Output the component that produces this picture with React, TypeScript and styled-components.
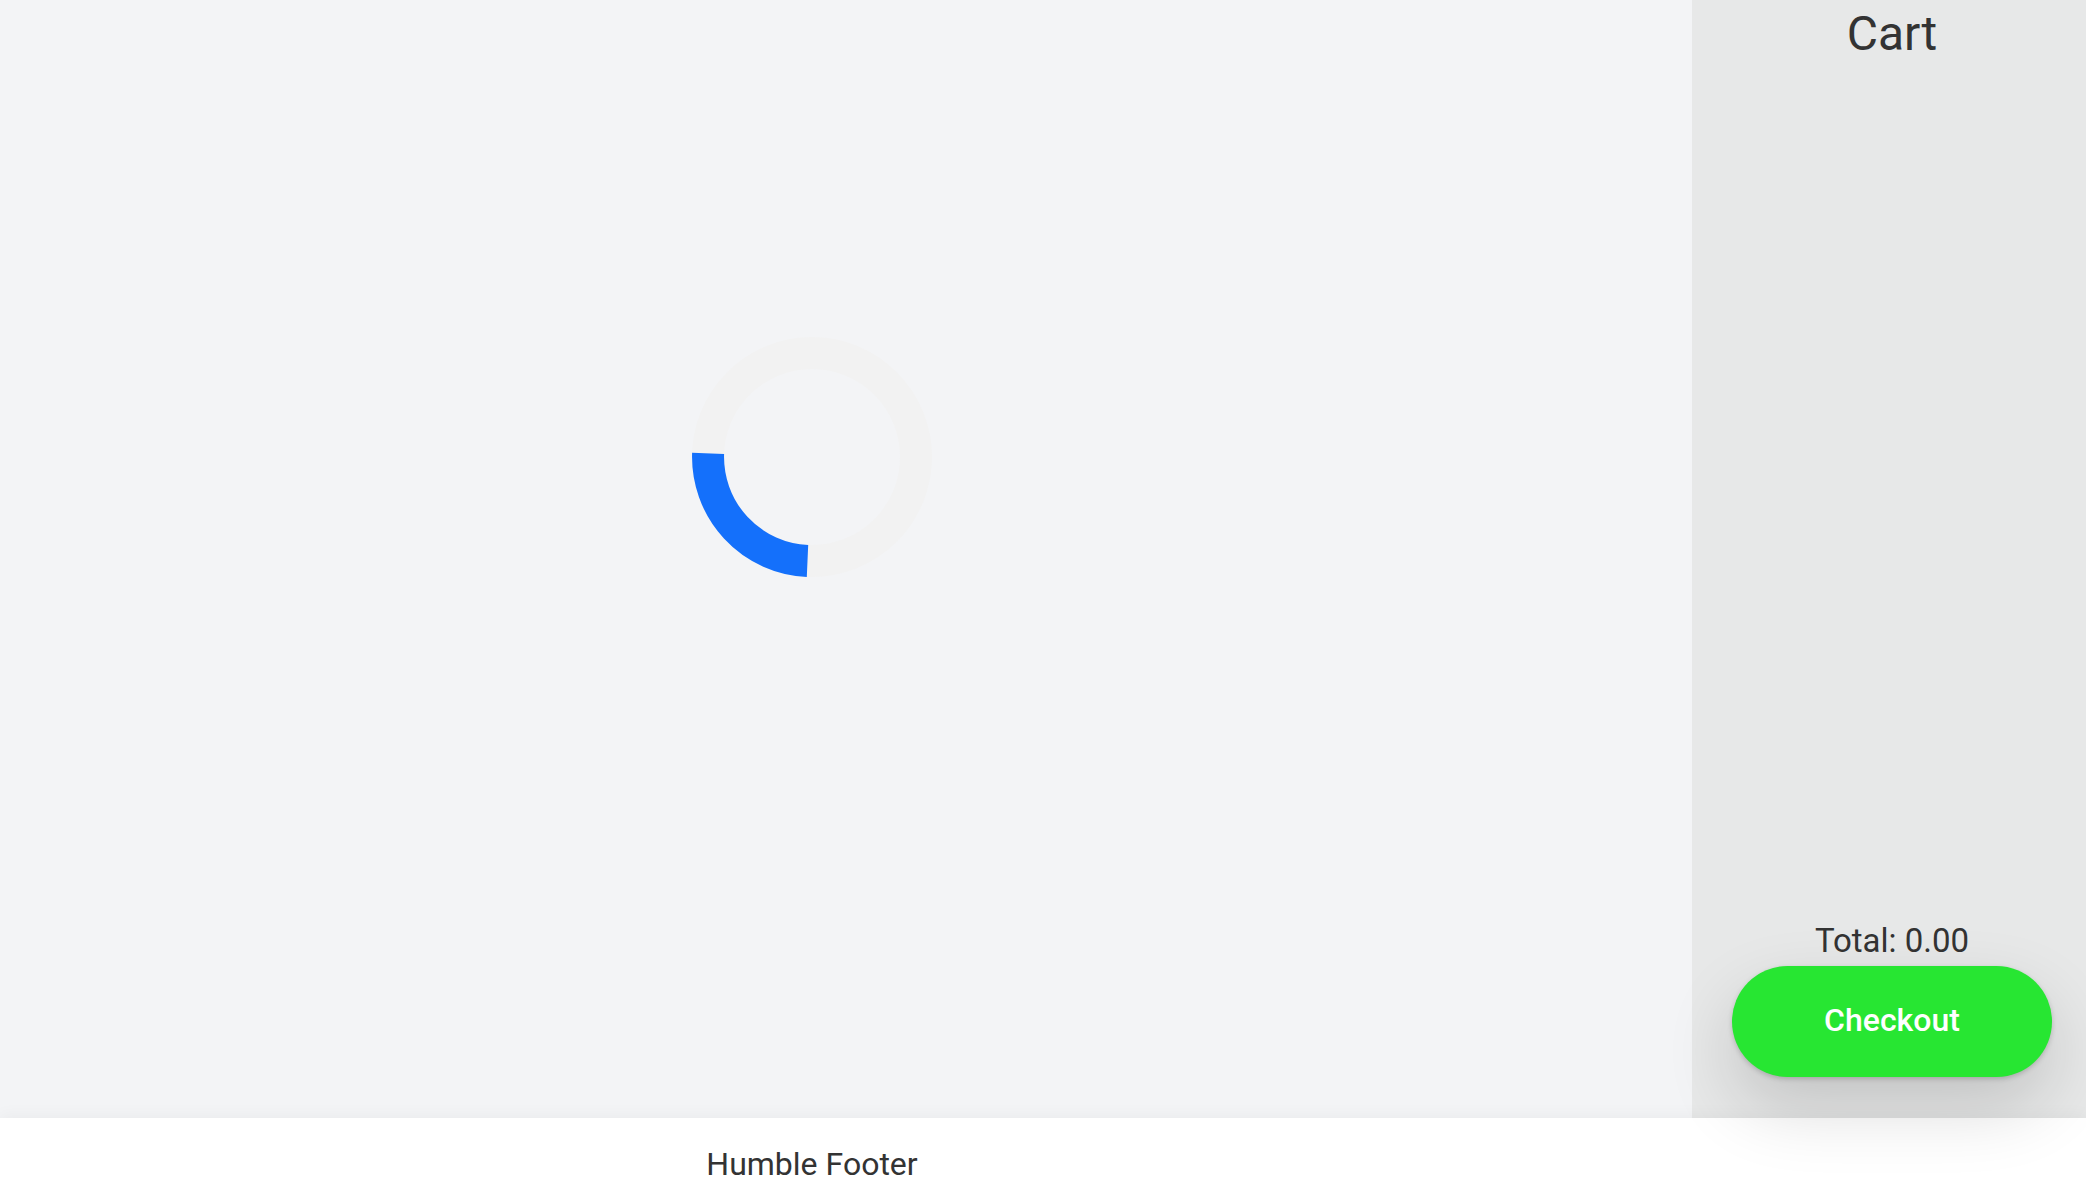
import React from "react";
import styled, { createGlobalStyle } from "styled-components";

const Global = createGlobalStyle`
  html, body { margin: 0; padding: 0; }
  body {
    font-family: Roboto, "Liberation Sans", Arial, sans-serif;
    color: #333333;
    background: #ffffff;
  }
`;

const Page = styled.div`
  display: flex;
  flex-direction: column;
  width: 2086px;
  height: 1190px;
  overflow: hidden;
`;

const Body = styled.div`
  display: flex;
  height: 1118px;
`;

const Content = styled.main`
  flex: 1;
  background: #f3f4f6;
  display: flex;
  justify-content: center;
  align-items: flex-start;
  padding: 337px 68px 0 0;
`;

const Sidebar = styled.aside`
  width: 394px;
  background: #e7e8e8;
  display: flex;
  flex-direction: column;
  align-items: center;
  padding: 0 0 41px 6px;
  box-sizing: border-box;
`;

const Title = styled.h1`
  margin: 0;
  padding-top: 6px;
  font-size: 48px;
  font-weight: 400;
  line-height: 56px;
  color: #333333;
`;

const Spacer = styled.div`
  flex: 1;
`;

const Total = styled.div`
  font-size: 33px;
  line-height: 40px;
  color: #333333;
  margin-bottom: 5px;
`;

const CheckoutButton = styled.button`
  position: relative;
  z-index: 2;
  width: 320px;
  height: 111px;
  padding: 0 0 3px;
  border: none;
  border-radius: 56px;
  background: #27e632;
  color: #ffffff;
  font-family: Roboto, "Liberation Sans", Arial, sans-serif;
  font-size: 32px;
  font-weight: 500;
  cursor: pointer;
  box-shadow: 0 2px 5px rgba(0, 0, 0, 0.18), 0 30px 70px rgba(0, 0, 0, 0.16);
`;

const Footer = styled.footer`
  position: relative;
  z-index: 1;
  height: 72px;
  background: #ffffff;
  box-shadow: 0 -4px 14px rgba(0, 0, 0, 0.035);
  display: flex;
  padding-top: 26px;
  box-sizing: border-box;
`;

const FooterCell = styled.div`
  width: 1624px;
  display: flex;
  justify-content: center;
`;

const FooterText = styled.span`
  font-size: 32px;
  line-height: 40px;
  color: #333333;
`;

const SpinnerSvg = styled.svg`
  width: 240px;
  height: 240px;
  display: block;
`;

function Spinner() {
  return (
    <SpinnerSvg viewBox="0 0 240 240">
      <circle cx="120" cy="120" r="104" fill="none" stroke="#f2f2f2" strokeWidth="32" />
      <path
        d="M 16.1 116.4 A 104 104 0 0 0 115.5 223.9"
        fill="none"
        stroke="#1470fb"
        strokeWidth="32"
        strokeLinecap="butt"
      />
    </SpinnerSvg>
  );
}

export default function App() {
  return (
    <>
      <Global />
      <Page>
        <Body>
          <Content>
            <Spinner />
          </Content>
          <Sidebar>
            <Title>Cart</Title>
            <Spacer />
            <Total>Total: 0.00</Total>
            <CheckoutButton>Checkout</CheckoutButton>
          </Sidebar>
        </Body>
        <Footer>
          <FooterCell>
            <FooterText>Humble Footer</FooterText>
          </FooterCell>
        </Footer>
      </Page>
    </>
  );
}
